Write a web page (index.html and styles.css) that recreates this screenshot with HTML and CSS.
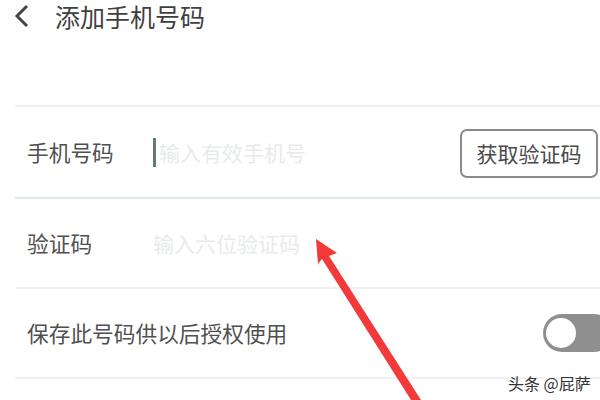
FILE: index.html
```html
<!DOCTYPE html>
<html>
<head>
<meta charset="utf-8">
<link rel="stylesheet" href="styles.css">
</head>
<body>
<div class="page">
  <header class="topbar">
    <svg class="back" width="20" height="26" viewBox="0 0 20 26"><path d="M13 3 L3 13 L13 23" fill="none" stroke="#444" stroke-width="3"/></svg>
    <span class="title">添加手机号码</span>
  </header>
  <div class="form">
    <div class="row row-phone">
      <span class="label">手机号码</span>
      <div class="field">
        <span class="cursor"></span>
        <span class="placeholder">输入有效手机号</span>
      </div>
      <button class="code-btn">获取验证码</button>
    </div>
    <div class="row row-code">
      <span class="label">验证码</span>
      <div class="field">
        <span class="placeholder">输入六位验证码</span>
      </div>
    </div>
    <div class="row row-save">
      <span class="label">保存此号码供以后授权使用</span>
      <span class="toggle"><span class="knob"></span></span>
    </div>
  </div>
  <svg class="arrow" width="600" height="400" viewBox="0 0 600 400">
    <polygon points="316,239 337,253 329,256 421,400 411,400 322,259 318,264" fill="#f23a3a"/>
  </svg>
  <div class="watermark">头条 @屁萨</div>
</div>
</body>
</html>
```

FILE: styles.css
```css
html, body {
  margin: 0;
  padding: 0;
  background: #fff;
}
.page {
  position: relative;
  width: 600px;
  height: 400px;
  overflow: hidden;
  font-family: "Noto Sans CJK SC", "Noto Sans", sans-serif;
}
.topbar {
  display: flex;
  align-items: center;
  height: 30px;
  padding-top: 1px;
  padding-left: 14px;
}
.back {
  display: block;
}
.title {
  margin-left: 21px;
  font-size: 25px;
  line-height: 30px;
  color: #3f3f3f;
}
.form {
  margin-top: 74px;
  margin-left: 15px;
  border-bottom: 2px solid #f0f0f0;
}
.row {
  display: flex;
  align-items: center;
  padding-left: 12px;
  border-top: 2px solid #f0f0f0;
}
.row-phone {
  height: 90px;
}
.row-code {
  height: 88px;
  border-top: 2px solid #d6ece4;
}
.row-save {
  height: 88px;
  justify-content: space-between;
}
.label {
  font-size: 21.7px;
  color: #505050;
  line-height: 30px;
}
.row-phone .label,
.row-code .label {
  width: 126px;
}
.field {
  flex: 1;
  display: flex;
  align-items: center;
}
.cursor {
  width: 3px;
  height: 29px;
  background: #5f7d73;
  margin-right: 3px;
}
.placeholder {
  font-size: 21px;
  color: #e8ebea;
  line-height: 30px;
}
.code-btn {
  width: 138px;
  height: 49px;
  margin-right: 2px;
  margin-top: 2px;
  border: 2px solid #8a8a8a;
  border-radius: 7px;
  background: #fff;
  font-family: "Noto Sans CJK SC", "Noto Sans", sans-serif;
  font-size: 21px;
  color: #4a4a4a;
  padding: 0;
}
.toggle {
  position: relative;
  width: 70px;
  height: 38px;
  margin-right: -13px;
  border-radius: 19px;
  background: #8f8f8f;
}
.knob {
  position: absolute;
  left: 3px;
  top: 4px;
  width: 30px;
  height: 30px;
  border-radius: 50%;
  background: #fff;
}
.arrow {
  position: absolute;
  left: 0;
  top: 0;
}
.watermark {
  position: absolute;
  left: 508px;
  top: 372px;
  font-size: 16px;
  line-height: 22px;
  color: #333;
  text-shadow: 0 0 2px #fff, 0 0 2px #fff;
}
```
